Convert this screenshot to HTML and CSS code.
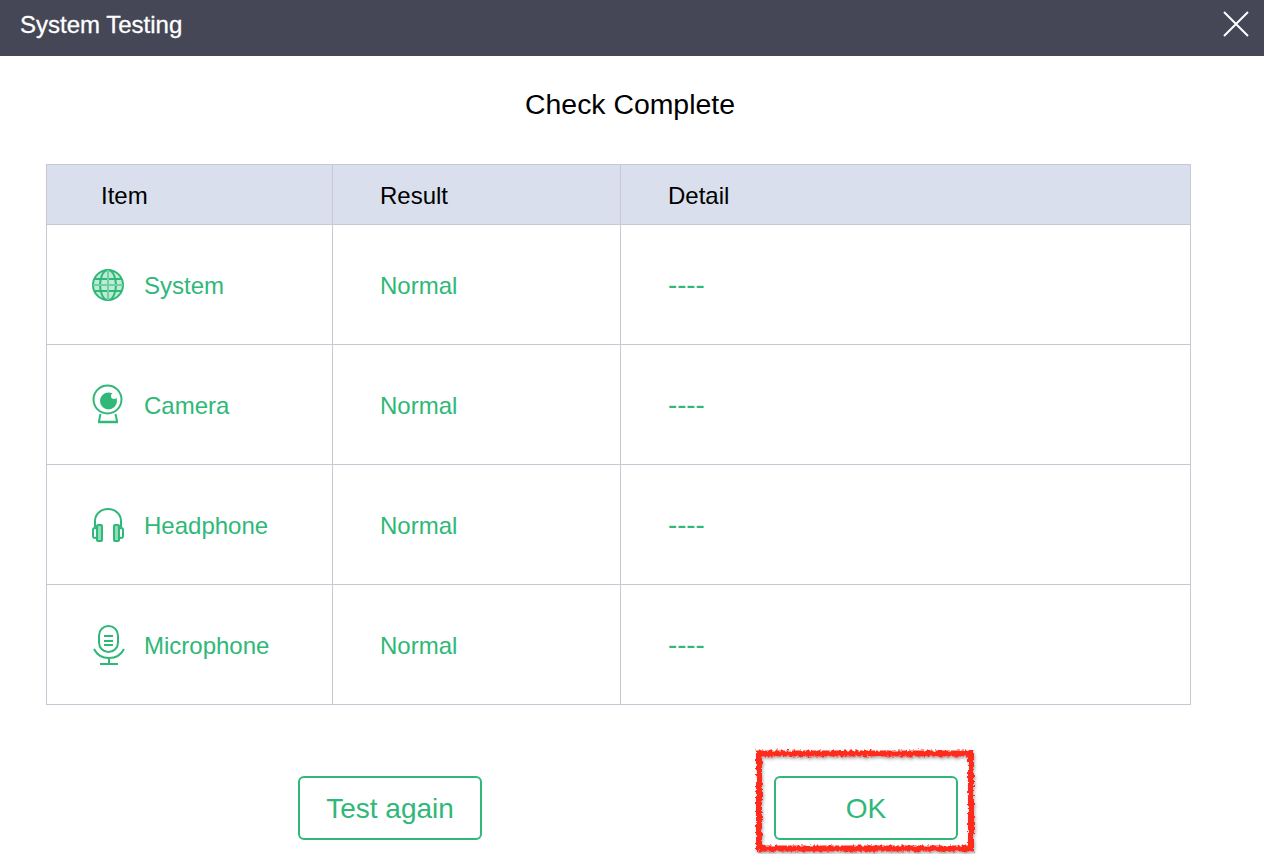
FILE: index.html
```html
<!DOCTYPE html>
<html lang="en">
<head>
<meta charset="utf-8">
<title>System Testing</title>
<link rel="stylesheet" href="styles.css">
</head>
<body>
<header class="titlebar">
  <span class="title">System Testing</span>
  <svg class="close" width="26" height="26" viewBox="0 0 26 26"><path d="M1 1L25 25M25 1L1 25" stroke="#fff" stroke-width="2" fill="none"/></svg>
</header>
<h1 class="heading">Check Complete</h1>
<table class="results">
  <thead>
    <tr><th class="c1">Item</th><th class="c2">Result</th><th class="c3">Detail</th></tr>
  </thead>
  <tbody>
    <tr>
      <td><div class="item">
        <svg class="icon" width="36" height="44" viewBox="0 0 36 44" fill="none" stroke="#2fb878" stroke-width="2"><circle cx="18" cy="21" r="15" fill="#bfead5"/><ellipse cx="18" cy="21" rx="8" ry="15"/><path d="M4 15H32M4 27H32"/><path d="M18 6V36M3 21H33" stroke="#6fd0a4"/></svg>
        <span>System</span></div></td>
      <td class="res">Normal</td><td class="det">----</td>
    </tr>
    <tr>
      <td><div class="item">
        <svg class="icon" width="36" height="44" viewBox="0 0 36 44" fill="none" stroke="#2fb878" stroke-width="2"><circle cx="17.500" cy="15.500" r="14"/><circle cx="18.500" cy="17" r="8.500" fill="#2fb878" stroke="none"/><circle cx="24" cy="12" r="3" fill="#fff" stroke="none"/><path d="M10.500 30L9 37M25.500 30L27 37"/><path d="M8 38H28" stroke-width="2.500"/></svg>
        <span>Camera</span></div></td>
      <td class="res">Normal</td><td class="det">----</td>
    </tr>
    <tr>
      <td><div class="item">
        <svg class="icon" width="36" height="44" viewBox="0 0 36 44" fill="none" stroke="#2fb878" stroke-width="2"><path d="M5 23V17a13 12 0 0 1 26 0V23"/><rect x="3" y="24" width="4" height="10" rx="2"/><rect x="7" y="21" width="5" height="16" rx="1" fill="#8fdcb8"/><rect x="24" y="21" width="5" height="16" rx="1" fill="#8fdcb8"/><rect x="29" y="24" width="4" height="10" rx="2"/></svg>
        <span>Headphone</span></div></td>
      <td class="res">Normal</td><td class="det">----</td>
    </tr>
    <tr>
      <td><div class="item">
        <svg class="icon" width="36" height="44" viewBox="0 0 36 44" fill="none" stroke="#2fb878" stroke-width="2"><rect x="9" y="2" width="19" height="26" rx="9.500"/><path d="M14 12H23M14 17H23M14 21H23"/><path d="M4 25c3 6 8 9 15 9s12-3 15-9"/><path d="M19 34V40M10 40H28"/></svg>
        <span>Microphone</span></div></td>
      <td class="res">Normal</td><td class="det">----</td>
    </tr>
  </tbody>
</table>
<div class="actions">
  <button class="btn" type="button">Test again</button>
  <button class="btn" type="button">OK</button>
</div>
<svg class="marker" width="230" height="116" viewBox="0 0 230 116">
  <defs><filter id="rough" x="-10%" y="-10%" width="120%" height="120%"><feTurbulence type="fractalNoise" baseFrequency="0.35" numOctaves="2" seed="4"/><feDisplacementMap in="SourceGraphic" scale="5"/><feDropShadow dx="1" dy="2" stdDeviation="1.500" flood-color="#777" flood-opacity="0.6"/></filter></defs>
  <rect x="9" y="11.500" width="212" height="95" fill="none" stroke="#ff2a1a" stroke-width="6" filter="url(#rough)"/>
</svg>
</body>
</html>
```
FILE: styles.css
```css
* { box-sizing: border-box; }
html, body { margin: 0; height: 100%; }
body {
  position: relative;
  background: #fff;
  font-family: "Liberation Sans", Arial, sans-serif;
  color: #000;
  overflow: hidden;
}
.titlebar {
  height: 56px;
  background: #454756;
  display: flex;
  align-items: center;
  justify-content: space-between;
  padding: 0 15px 6px 20px;
  color: #fff;
  font-size: 24px;
}
.title { -webkit-text-stroke: 0.3px #fff; }
.close { display: block; margin-bottom: 2px; }
.heading {
  margin: 32px 0 0;
  padding-right: 4px;
  height: 32px;
  line-height: 32px;
  font-size: 28.4px;
  font-weight: 400;
  text-align: center;
}
.results {
  margin: 44px 0 0 46px;
  width: 1145px;
  table-layout: fixed;
  border-collapse: collapse;
  border: 1px solid #c8c8d4;
  font-size: 24px;
}
.results th, .results td { border: 1px solid #c8c8d4; padding: 2px 0 0; text-align: left; font-weight: 400; }
.results thead tr { height: 60px; background: #d9dfec; }
.results tbody tr { height: 120px; }
.results td { color: #2fb878; }
.c1 { width: 286px; padding-left: 54px !important; }
.c2 { width: 288px; padding-left: 47px !important; }
.c3 { padding-left: 47px !important; }
.res { padding-left: 47px !important; }
.results .det { padding: 0 0 0 47px; font-size: 27.5px; }
.item { display: flex; align-items: center; position: relative; padding-left: 97px; }
.icon { position: absolute; left: 43px; top: 50%; transform: translateY(-50%); filter: blur(0.4px); }
.actions {
  display: flex;
  margin: 71px 0 0 298px;
  gap: 292px;
}
.btn {
  width: 184px;
  height: 64px;
  padding: 2px 0 0;
  background: #fff;
  border: 2px solid #2fb878;
  border-radius: 6px;
  color: #2fb878;
  font: 400 28px "Liberation Sans", Arial, sans-serif;
}
.marker { position: absolute; left: 750px; top: 742px; }
```
